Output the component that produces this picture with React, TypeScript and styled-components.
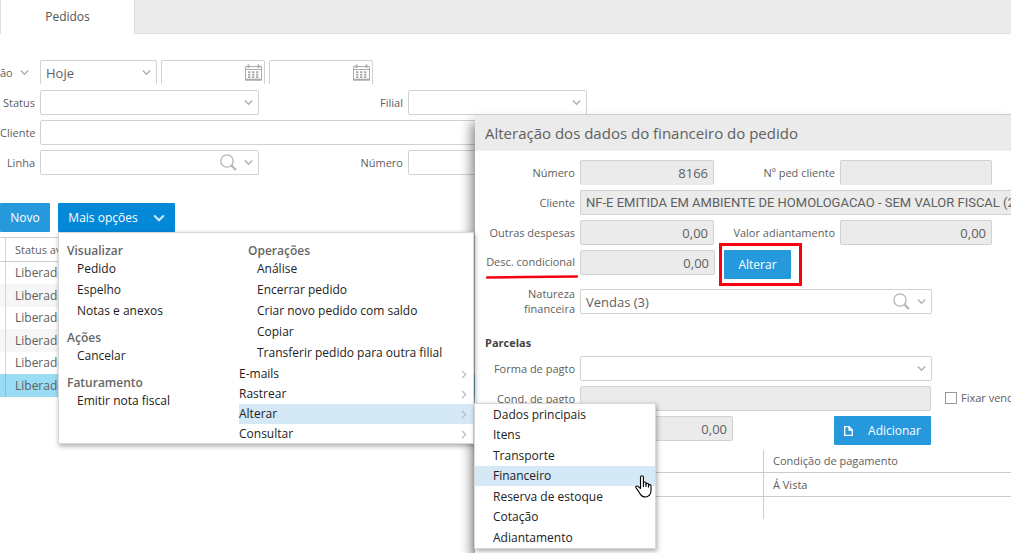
import React, { useId } from "react";
import styled, { createGlobalStyle, css } from "styled-components";

const Global = createGlobalStyle`
  *, *::before, *::after { box-sizing: border-box; }
  body {
    margin: 0;
    background: #fff;
    color: #606060;
    font: 12px/16px "Open Sans", "Noto Sans", sans-serif;
  }
  button, input, select { font: inherit; color: inherit; }
  svg { flex: none; }
  ul, h1, h2, h3 { margin: 0; padding: 0; font-size: inherit; }
  ul { list-style: none; }
`;

const Page = styled.div`
  position: relative;
  height: 100vh;
  overflow: hidden;
`;

const TabBar = styled.nav`
  display: flex;
  height: 34px;
  background: #ebebeb;
  border-bottom: 1px solid #dfdfdf;
`;

const Tab = styled.a`
  width: 135px;
  height: 34px;
  line-height: 34px;
  text-align: center;
  background: #fff;
  border: solid #dfdfdf;
  border-width: 0 1px;
  color: #555;
  text-decoration: none;
`;

/* ---------- icons ---------- */

const Chevron = ({ size = 9, color = "#b0b0b0" }: { size?: number; color?: string }) => (
  <svg width={size} height={size} viewBox="0 0 9 9" fill="none" stroke={color} strokeWidth="1.5" aria-hidden="true">
    <path d="M0.8 2.5 4.5 6.2 8.2 2.5" />
  </svg>
);

const ChevronRight = () => (
  <svg width="6" height="9" viewBox="0 0 6 9" fill="none" stroke="#b8b8b8" strokeWidth="1.2" aria-hidden="true">
    <path d="M1 0.8 4.7 4.5 1 8.2" />
  </svg>
);

const Search = () => (
  <svg width="17" height="17" viewBox="0 0 17 17" fill="none" stroke="#b4b4b4" aria-hidden="true">
    <circle cx="7" cy="7" r="6.2" strokeWidth="1.3" />
    <path d="M11.5 11.5 16 16" strokeWidth="2.2" />
  </svg>
);

const Calendar = () => (
  <svg width="17" height="17" viewBox="0 0 17 17" fill="none" stroke="#ababab" aria-hidden="true">
    <path d="M0.5 2.5H16.5V16H0.5Z" />
    <path d="M0 15.6H17" strokeWidth="1.8" />
    <path d="M0.5 5.5H16.5" />
    <path d="M3.5 0.5V4M13.5 0.5V4" strokeWidth="1.8" />
    <path d="M3 8.2H14M3 10.7H14M3 13.2H14" strokeWidth="1.8" strokeDasharray="2.4 1.6" />
  </svg>
);

const PageIcon = () => (
  <svg width="9" height="10" viewBox="0 0 9 10" fill="none" stroke="#fff" strokeWidth="1.3" aria-hidden="true">
    <path d="M0.7 0.7H5L8.3 4V9.3H0.7Z" />
    <path d="M5 0.7V4H8.3" />
  </svg>
);

const Hand = () => (
  <svg width="17" height="23" viewBox="0 0 17 23" fill="#fff" stroke="#000" strokeWidth="1.1" strokeLinejoin="round" aria-hidden="true">
    <path d="M5.5 13.5V2.2C5.5 0.3 8.4 0.3 8.4 2.2V8C8.4 6.6 11 6.7 11 8.3V9.2C11 7.8 13.5 7.9 13.5 9.4V10.4C13.5 9.2 16 9.3 16 10.9V15.5C16 19 13.6 22 10.4 22C7.6 22 6.2 20.8 4.8 18.4L1 12.8C0.2 11.4 1.9 10.4 3.1 11.4Z" />
    <path d="M8.4 8V12M11 9V12M13.5 10V12.4" />
  </svg>
);

/* ---------- form parts ---------- */

const Box = styled.div`
  position: relative;
  display: flex;
  min-width: 0;
`;

const control = css<{ $cut?: boolean }>`
  width: 100%;
  min-width: 0;
  height: 25px;
  padding: 0 5px;
  border: 1px solid #d2d2d2;
  border-radius: 2px;
  background: #fff;
  font-size: 13px;
  outline: none;
  ${(p) => p.$cut && "border-bottom-color: transparent;"}
`;

const TextInput = styled.input<{ $cut?: boolean; $right?: boolean; $caps?: boolean }>`
  ${control}
  text-align: ${(p) => (p.$right ? "right" : "left")};
  ${(p) => p.$caps && "padding-right: 0; border-right: 0; font-family: Roboto, sans-serif;"}
  &:read-only { background: #ebebeb; }
`;

const SelectInput = styled.select<{ $cut?: boolean }>`
  ${control}
  appearance: none;
`;

const Adorn = styled.span<{ $edge?: boolean }>`
  position: absolute;
  top: 0;
  right: ${(p) => (p.$edge ? "3px" : "6px")};
  bottom: 0;
  display: flex;
  align-items: center;
  gap: 7px;
  pointer-events: none;
`;

const Label = styled.label`
  padding-bottom: 1px;
  font-size: 11px;
  line-height: 15px;
  text-align: right;
  white-space: nowrap;
`;

type FieldProps = {
  label: React.ReactNode;
  kind?: "text" | "select" | "lookup";
  value?: string;
  readOnly?: boolean;
  right?: boolean;
  cut?: boolean;
  caps?: boolean;
};

const Field = ({ label, kind = "text", value = "", readOnly, right, cut, caps }: FieldProps) => {
  const id = useId();
  return (
    <>
      <Label htmlFor={id}>{label}</Label>
      <Box>
        {kind === "select" ? (
          <SelectInput id={id} $cut={cut}>
            <option>{value}</option>
          </SelectInput>
        ) : (
          <TextInput id={id} defaultValue={value} readOnly={readOnly} $right={right} $cut={cut} $caps={caps} />
        )}
        {kind !== "text" && (
          <Adorn>
            {kind === "lookup" && <Search />}
            <Chevron />
          </Adorn>
        )}
      </Box>
    </>
  );
};

const DateBox = ({ label }: { label: string }) => (
  <Box>
    <TextInput $cut aria-label={label} />
    <Adorn $edge>
      <Calendar />
    </Adorn>
  </Box>
);

/* ---------- filters ---------- */

const Filters = styled.form`
  display: grid;
  gap: 5px;
  padding-top: 26px;
`;

const PeriodRow = styled.div`
  display: grid;
  grid-template-columns: 36px 117px 104px 104px;
  gap: 4px;
  align-items: center;
`;

const PeriodKind = styled.button`
  display: flex;
  align-items: center;
  gap: 7px;
  padding: 0;
  border: 0;
  background: none;
  font-size: 11px;
`;

const FilterRow = styled.div<{ $wide?: boolean }>`
  display: grid;
  grid-template-columns: ${(p) => (p.$wide ? "35px 1fr" : "35px 219px 139px 179px")};
  gap: 5px;
  align-items: center;
`;

/* ---------- buttons ---------- */

const Actions = styled.div`
  display: flex;
  gap: 8px;
  margin-top: 28px;
`;

const Button = styled.button<{ $open?: boolean }>`
  display: flex;
  align-items: center;
  justify-content: center;
  gap: 15px;
  height: 29px;
  padding: 0 10px;
  border: 0;
  border-radius: 1px;
  background: ${(p) => (p.$open ? "#0488d8" : "#2699dd")};
  color: #fff;
  white-space: nowrap;
`;

const NewButton = styled(Button)`
  width: 50px;
`;

const OptionsButton = styled(Button)`
  width: 117px;
`;

const MenuAnchor = styled.div`
  position: relative;
`;

/* ---------- menus ---------- */

const popup = css`
  position: absolute;
  background: #fff;
  border: 1px solid #d8d8d8;
  box-shadow: 1px 2px 5px rgba(0, 0, 0, 0.35);
  color: #222;
`;

const Menu = styled.div`
  ${popup}
  top: 29px;
  left: 0;
  z-index: 3;
  display: grid;
  grid-template-columns: 180px 1fr;
  width: 416px;
  height: 212px;
  padding-top: 8px;
`;

const GroupTitle = styled.h3<{ $spaced?: boolean }>`
  height: 18px;
  margin-top: ${(p) => (p.$spaced ? "6px" : "0")};
  padding-left: 8px;
  line-height: 20px;
  font-weight: 600;
  color: #666;
`;

const MenuItem = styled.li`
  height: 21px;
  padding-left: 18px;
  line-height: 20px;
  white-space: nowrap;
`;

const Operations = styled.div`
  & > h3 { padding-left: 9px; }
`;

const Branch = styled.li<{ $active?: boolean }>`
  position: relative;
  display: flex;
  align-items: center;
  justify-content: space-between;
  height: 20px;
  padding-right: 6px;
  background: ${(p) => (p.$active ? "#d5e8f6" : "none")};
`;

const SubMenu = styled.ul`
  ${popup}
  top: -1px;
  left: 235px;
  width: 182px;
  height: 146px;
`;

const SubItem = styled.li<{ $active?: boolean }>`
  height: 21px;
  padding-left: 18px;
  line-height: 21px;
  background: ${(p) => (p.$active ? "#d5e8f6" : "none")};
  &:nth-child(even) { height: 20px; line-height: 20px; }
`;

const Pointer = styled.span`
  position: absolute;
  top: 71px;
  right: 3px;
  line-height: 0;
`;

/* ---------- orders table ---------- */

const Orders = styled.table`
  width: 100%;
  margin-top: 5px;
  border-top: 1px solid #ccc;
  border-collapse: separate;
  border-spacing: 0;
  th, td {
    height: 22px;
    padding: 0 9px;
    border-left: 1px solid #d6d6d6;
    font-size: 11px;
    font-weight: 400;
    text-align: left;
  }
  th:first-child, td:first-child { width: 5px; padding: 0; border: 0; }
  th, th:first-child { height: 24px; border-bottom: 1px solid #ccc; }
  td { font-size: 12px; }
  tbody tr:nth-child(even) td { height: 23px; background: #f6f6f6; }
  tbody tr:last-child td { background: #99dcf3; border-color: #6fc8e6; }
`;

/* ---------- dialog ---------- */

const Dialog = styled.section`
  position: absolute;
  top: 114px;
  left: 475px;
  right: 0;
  bottom: 0;
  z-index: 2;
  overflow: hidden;
  border-top: 1px solid #ccc;
  border-top-left-radius: 4px;
  background: #fff;
  box-shadow: -4px 8px 12px rgba(0, 0, 0, 0.45);
`;

const DialogTitle = styled.h2`
  height: 36px;
  padding-left: 10px;
  border-bottom: 1px solid #f3f3f3;
  background: #ebebeb;
  font-size: 15px;
  font-weight: 400;
  line-height: 36px;
  white-space: nowrap;
`;

const DialogBody = styled.form`
  display: grid;
  gap: 5px;
  padding-top: 9px;
`;

const DialogRow = styled.div<{ $cols: string }>`
  display: grid;
  grid-template-columns: 100px ${(p) => p.$cols};
  gap: 5px;
  align-items: center;
`;

const Underlined = styled.span`
  position: relative;
`;

const RedStroke = styled.svg`
  position: absolute;
  top: 21px;
  right: -3px;
`;

const Highlight = styled.div`
  width: 83px;
  height: 43px;
  margin: -7px 0 -11px -1px;
  padding: 4px 2px;
  border: 3px solid #fb0010;
  & > button { width: 67px; }
`;

const DiscountRow = styled(DialogRow)`
  align-items: start;
  & > label { padding-top: 4px; }
`;

const NatureRow = styled(DialogRow)`
  margin-top: 6px;
`;

const SectionTitle = styled.h3`
  margin: 13px 0 1px;
  padding-left: 10px;
  font-size: 11px;
  font-weight: 700;
  line-height: 15px;
  color: #444;
`;

const Check = styled.label`
  display: flex;
  align-items: center;
  gap: 4px;
  margin-left: 9px;
  padding-bottom: 2px;
  font-size: 11px;
  white-space: nowrap;
  input {
    appearance: none;
    flex: none;
    width: 12px;
    height: 12px;
    margin: 0;
    border: 1px solid #999;
    background: #fff;
  }
`;

const AmountRow = styled.div`
  display: grid;
  grid-template-columns: 153px 97px;
  justify-content: start;
  gap: 101px;
  padding-left: 105px;
`;

const Installments = styled.table`
  width: 100%;
  border-collapse: separate;
  border-spacing: 0;
  th, td {
    height: 23px;
    padding: 0 9px;
    border-bottom: 1px solid #ccc;
    font-size: 11px;
    font-weight: 400;
    text-align: left;
  }
  th:first-child { width: 288px; }
  th + th, td + td { border-left: 1px solid #ccc; }
  td { height: 24px; }
  tr:last-child td { height: 22px; border-bottom: 0; }
  thead tr:last-child th { padding-bottom: 1px; }
`;

const left = [
  { title: "Visualizar", items: ["Pedido", "Espelho", "Notas e anexos"] },
  { title: "Ações", items: ["Cancelar"] },
  { title: "Faturamento", items: ["Emitir nota fiscal"] },
];
const operations = ["Análise", "Encerrar pedido", "Criar novo pedido com saldo", "Copiar", "Transferir pedido para outra filial"];
const branches = ["E-mails", "Rastrear", "Alterar", "Consultar"];
const changes = ["Dados principais", "Itens", "Transporte", "Financeiro", "Reserva de estoque", "Cotação", "Adiantamento"];

export default function App() {
  return (
    <Page>
      <Global />
      <TabBar>
        <Tab href="#pedidos">Pedidos</Tab>
      </TabBar>

      <Filters>
        <PeriodRow>
          <PeriodKind type="button">
            ão <Chevron />
          </PeriodKind>
          <Box>
            <SelectInput $cut aria-label="Período">
              <option>Hoje</option>
            </SelectInput>
            <Adorn>
              <Chevron />
            </Adorn>
          </Box>
          <DateBox label="Data inicial" />
          <DateBox label="Data final" />
        </PeriodRow>
        <FilterRow>
          <Field label="Status" kind="select" />
          <Field label="Filial" kind="select" />
        </FilterRow>
        <FilterRow $wide>
          <Field label="Cliente" />
        </FilterRow>
        <FilterRow>
          <Field label="Linha" kind="lookup" />
          <Field label="Número" />
        </FilterRow>
      </Filters>

      <Actions>
        <NewButton type="button">Novo</NewButton>
        <MenuAnchor>
          <OptionsButton type="button" $open>
            Mais opções <Chevron size={12} color="#d6ecf9" />
          </OptionsButton>
          <Menu>
            <div>
              {left.map((group, i) => (
                <React.Fragment key={group.title}>
                  <GroupTitle $spaced={i > 0}>{group.title}</GroupTitle>
                  <ul>
                    {group.items.map((item) => (
                      <MenuItem key={item}>{item}</MenuItem>
                    ))}
                  </ul>
                </React.Fragment>
              ))}
            </div>
            <Operations>
              <GroupTitle>Operações</GroupTitle>
              <ul>
                {operations.map((item) => (
                  <MenuItem key={item}>{item}</MenuItem>
                ))}
                {branches.map((item) => (
                  <Branch key={item} $active={item === "Alterar"}>
                    {item}
                    <ChevronRight />
                    {item === "Alterar" && (
                      <SubMenu>
                        {changes.map((change) => (
                          <SubItem key={change} $active={change === "Financeiro"}>
                            {change}
                          </SubItem>
                        ))}
                        <Pointer>
                          <Hand />
                        </Pointer>
                      </SubMenu>
                    )}
                  </Branch>
                ))}
              </ul>
            </Operations>
          </Menu>
        </MenuAnchor>
      </Actions>

      <Orders>
        <thead>
          <tr>
            <th />
            <th>Status avaliação</th>
          </tr>
        </thead>
        <tbody>
          {[1, 2, 3, 4, 5, 6].map((n) => (
            <tr key={n}>
              <td />
              <td>Liberado</td>
            </tr>
          ))}
        </tbody>
      </Orders>

      <Dialog role="dialog" aria-label="Alteração dos dados do financeiro do pedido">
        <DialogTitle>Alteração dos dados do financeiro do pedido</DialogTitle>
        <DialogBody>
          <DialogRow $cols="134px 116px 152px">
            <Field label="Número" value="8166" readOnly right cut />
            <Field label="Nº ped cliente" readOnly cut />
          </DialogRow>
          <DialogRow $cols="1fr">
            <Field label="Cliente" value="NF-E EMITIDA EM AMBIENTE DE HOMOLOGACAO - SEM VALOR FISCAL (2" readOnly caps />
          </DialogRow>
          <DialogRow $cols="134px 116px 152px">
            <Field label="Outras despesas" value="0,00" readOnly right />
            <Field label="Valor adiantamento" value="0,00" readOnly right />
          </DialogRow>
          <DiscountRow $cols="135px auto">
            <Field
              label={
                <Underlined>
                  Desc. condicional
                  <RedStroke width="92" height="4" viewBox="0 0 92 4" aria-hidden="true">
                    <path d="M1 2.5 L40 2 L91 1.5" stroke="#f5000f" strokeWidth="2.5" strokeLinecap="round" />
                  </RedStroke>
                </Underlined>
              }
              value="0,00"
              readOnly
              right
            />
            <Highlight>
              <Button type="button">Alterar</Button>
            </Highlight>
          </DiscountRow>
          <NatureRow $cols="352px">
            <Field
              label={
                <>
                  Natureza
                  <br />
                  financeira
                </>
              }
              kind="lookup"
              value="Vendas (3)"
            />
          </NatureRow>
          <SectionTitle>Parcelas</SectionTitle>
          <DialogRow $cols="352px">
            <Field label="Forma de pagto" kind="select" />
          </DialogRow>
          <DialogRow $cols="351px auto">
            <Field label="Cond. de pagto" readOnly />
            <Check>
              <input type="checkbox" />
              Fixar vencimento
            </Check>
          </DialogRow>
          <AmountRow>
            <TextInput aria-label="Valor" defaultValue="0,00" readOnly $right />
            <Button type="button">
              <PageIcon /> Adicionar
            </Button>
          </AmountRow>
          <Installments>
            <thead>
              <tr>
                <th />
                <th>Condição de pagamento</th>
              </tr>
            </thead>
            <tbody>
              <tr>
                <td />
                <td>Á Vista</td>
              </tr>
              <tr>
                <td />
                <td />
              </tr>
            </tbody>
          </Installments>
        </DialogBody>
      </Dialog>
    </Page>
  );
}
